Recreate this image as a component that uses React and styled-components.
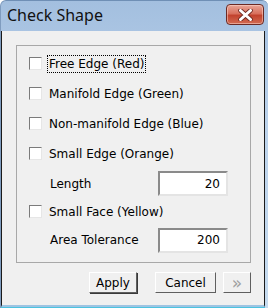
import React from 'react'
import styled, { createGlobalStyle } from 'styled-components';

const GlobalStyle = createGlobalStyle`
  html, body {
    margin: 0;
    padding: 0;
    background: #fff;
  }
`;

const Window = styled.div`
  width: 268px;
  height: 308px;
  box-sizing: border-box;
  display: flex;
  flex-direction: column;
  background: linear-gradient(to bottom, #a3bfdf 0%, #bcd3ec 40%, #c6dbef 100%);
  border-top: 1px solid #6f8fb5;
  border-left: 1px solid #7f9cbf;
  border-radius: 6px 6px 0 0;
  padding: 0 3px 0 0;
  font-family: "DejaVu Sans", sans-serif;
  font-size: 12px;
  color: #000;
  overflow: hidden;
`;

const TitleBar = styled.div`
  height: 30px;
  display: flex;
  align-items: center;
  justify-content: space-between;
  padding: 0 1px 0 6px;
`;

const Title = styled.span`
  font-family: "Noto Sans", sans-serif;
  font-size: 16px;
  color: #111;
  margin-top: -2px;
`;

const CloseButton = styled.div`
  width: 38px;
  height: 21px;
  margin-top: -3px;
  box-sizing: border-box;
  border: 1px solid #6b2a24;
  border-radius: 4px;
  background: linear-gradient(to bottom, #e8a596 0%, #d8715e 45%, #c2432e 55%, #d26b52 100%);
  box-shadow: inset 0 0 0 1px rgba(255, 220, 210, 0.5);
  display: flex;
  align-items: center;
  justify-content: center;
`;

const Body = styled.div`
  flex: 1;
  background: #f0f0f0;
  border-left: 1px solid #1a1a1a;
  border-right: 1px solid #1a1a1a;
  border-bottom: 2px solid #9ec4e2;
  box-shadow: 0 1px 0 #4cc3e0;
  margin-bottom: 1px;
  display: flex;
  flex-direction: column;
  padding: 14px 13px 0 14px;
`;

const Group = styled.div`
  border: 1px solid #a8a8a8;
  height: 218px;
  box-sizing: border-box;
  display: flex;
  flex-direction: column;
  padding: 3px 0 0 12px;
`;

const Row = styled.div`
  height: ${p => p.$h}px;
  display: flex;
  align-items: center;
`;

const Box = styled.span`
  width: 13px;
  height: 13px;
  box-sizing: border-box;
  background: #fff;
  border: 1px solid;
  border-color: #7b7b7b #e6e6e6 #e6e6e6 #7b7b7b;
  margin-right: 5px;
  margin-top: -2px;
  flex-shrink: 0;
`;

const Label = styled.span`
  padding: 1px 1px;
  border: 1px dotted ${p => (p.$focus ? '#000' : 'transparent')};
`;

const FieldLabel = styled.span`
  margin-left: 21px;
  flex: 1;
`;

const Field = styled.div`
  width: 70px;
  height: 25px;
  box-sizing: border-box;
  margin-right: 22px;
  background: #fff;
  border: 2px solid;
  border-color: #8a8a8a #e4e4e4 #e4e4e4 #8a8a8a;
  display: flex;
  align-items: center;
  justify-content: flex-end;
  padding-right: 6px;
`;

const Buttons = styled.div`
  display: flex;
  justify-content: flex-end;
  align-items: center;
  margin-top: 9px;
  gap: 7px;
`;

const Button = styled.div`
  height: 21px;
  width: ${p => p.$w}px;
  box-sizing: border-box;
  border: 1px solid;
  border-color: #fff #5f5f5f #5f5f5f #fff;
  box-shadow: ${p => (p.$default ? '1px 1px 0 #3a3a3a' : '0 0 0 0 transparent')};
  background: #f0f0f0;
  display: flex;
  align-items: center;
  justify-content: center;
  color: ${p => (p.$disabled ? '#a0a0a0' : '#000')};
  font-size: ${p => (p.$disabled ? '17px' : '12px')};
  margin-left: ${p => p.$ml || 0}px;
`;

const XIcon = () => (
  <svg width="15" height="12" viewBox="0 0 15 12">
    <path d="M2.5 1.5 L12.5 10.5 M12.5 1.5 L2.5 10.5" stroke="#6e2a22" strokeWidth="4.6" strokeLinecap="round" />
    <path d="M2.5 1.5 L12.5 10.5 M12.5 1.5 L2.5 10.5" stroke="#fff" strokeWidth="3" strokeLinecap="round" />
  </svg>
);

const CheckRow = ({ label, focus, h = 30 }) => (
  <Row $h={h}>
    <Box />
    <Label $focus={focus}>{label}</Label>
  </Row>
);

const FieldRow = ({ label, value, h }) => (
  <Row $h={h}>
    <FieldLabel>{label}</FieldLabel>
    <Field>{value}</Field>
  </Row>
);

const App = () => {
  return (
    <>
      <GlobalStyle />
      <Window>
        <TitleBar>
          <Title>Check Shape</Title>
          <CloseButton>
            <XIcon />
          </CloseButton>
        </TitleBar>
        <Body>
          <Group>
            <CheckRow label="Free Edge (Red)" focus />
            <CheckRow label="Manifold Edge (Green)" />
            <CheckRow label="Non-manifold Edge (Blue)" />
            <CheckRow label="Small Edge (Orange)" />
            <FieldRow label="Length" value="20" h={29} />
            <CheckRow label="Small Face (Yellow)" h={28} />
            <FieldRow label="Area Tolerance" value="200" h={28} />
          </Group>
          <Buttons>
            <Button $w={48} $default>Apply</Button>
            <Button $w={61} $ml={11}>Cancel</Button>
            <Button $w={28} $disabled>»</Button>
          </Buttons>
        </Body>
      </Window>
    </>
  )
}

export default App
